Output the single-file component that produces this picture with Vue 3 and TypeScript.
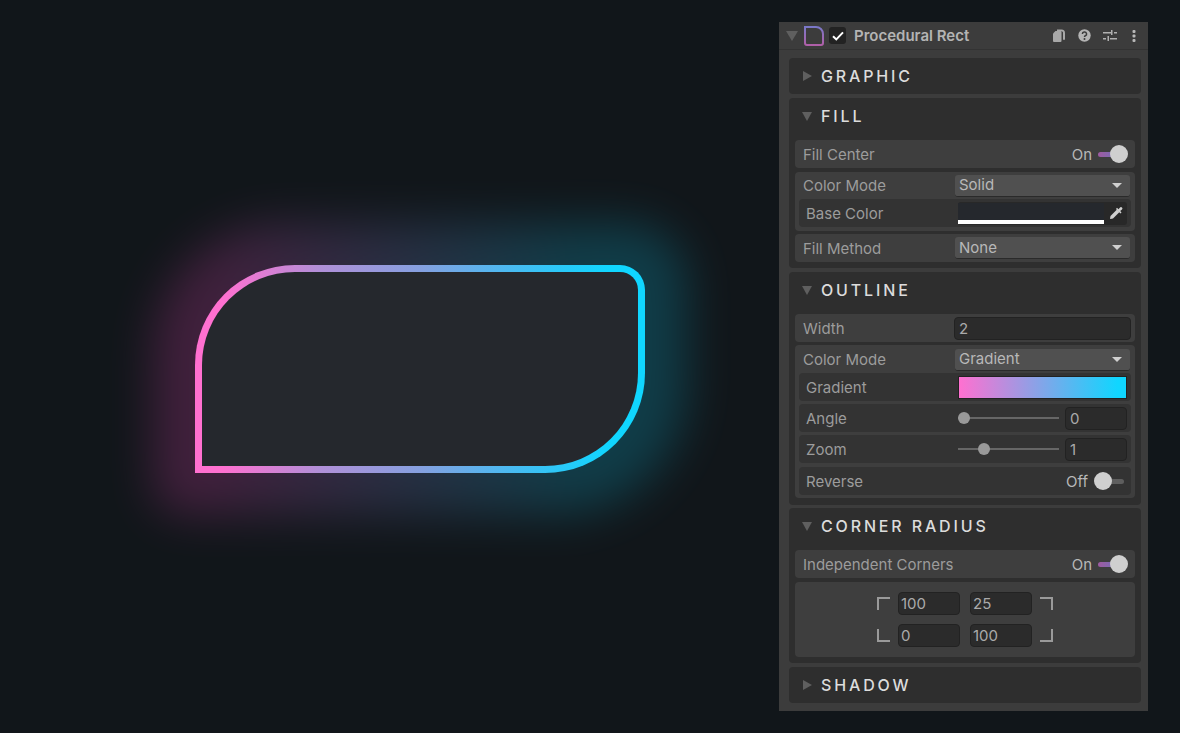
<script setup lang="ts">
const corners = [
  { value: '100', path: 'M1 13V1H13' },
  { value: '25', path: 'M0 1H12V13' },
  { value: '0', path: 'M1 0V12H13' },
  { value: '100', path: 'M0 12H12V0' },
];
</script>

<template>
  <div class="page">
    <main class="canvas">
      <div class="shape-wrap">
        <div class="glow"></div>
        <div class="shape"><div class="shape-inner"></div></div>
      </div>
    </main>

    <aside class="panel">
      <header class="panel-head">
        <span class="tri tri-down head-tri"></span>
        <svg class="comp-icon" width="20" height="20" viewBox="0 0 20 20" fill="none">
          <defs>
            <linearGradient id="compStroke" x1="0" y1="0" x2="0" y2="1">
              <stop offset="0" stop-color="#7a78c8" />
              <stop offset="1" stop-color="#b05fa8" />
            </linearGradient>
          </defs>
          <path d="M1 1H12A7 7 0 0 1 19 8V17A2 2 0 0 1 17 19H3A2 2 0 0 1 1 17Z" stroke="url(#compStroke)" stroke-width="2" />
        </svg>
        <span class="check">
          <svg width="12" height="10" viewBox="0 0 12 10" fill="none">
            <path d="M1 5.2L4.3 8.4L11 1.4" stroke="#fff" stroke-width="2" />
          </svg>
        </span>
        <span class="panel-title">Procedural Rect</span>
        <span class="head-icons">
          <svg width="14" height="15" viewBox="0 0 14 15" fill="#a8a8a8">
            <path d="M1 5.5L3.5 3H8.5A1 1 0 0 1 9.500 4V13A1 1 0 0 1 8.500 14H2A1 1 0 0 1 1 13Z" />
            <path d="M5 1.500H9.500A3.500 3.500 0 0 1 13 5V11A1 1 0 0 1 11 11V5.500A2 2 0 0 0 9 3.200H5Z" />
          </svg>
          <svg width="13" height="13" viewBox="0 0 13 13">
            <circle cx="6.500" cy="6.500" r="6.200" fill="#b4b4b4" />
            <path d="M4.400 5A2.100 1.900 0 1 1 7.400 6.700C6.700 7.100 6.500 7.400 6.500 8" stroke="#3c3c3c" stroke-width="1.500" fill="none" />
            <circle cx="6.500" cy="10" r="1" fill="#3c3c3c" />
          </svg>
          <svg width="14" height="13" viewBox="0 0 14 13" fill="#b0b0b0">
            <rect x="0" y="3" width="8" height="1.500" />
            <rect x="8" y="1" width="1.500" height="5" />
            <rect x="11" y="3" width="3" height="1.500" />
            <rect x="0" y="9" width="3" height="1.500" />
            <rect x="4.500" y="7" width="1.500" height="5" />
            <rect x="7" y="9" width="7" height="1.500" />
          </svg>
          <svg class="dots" width="4" height="12" viewBox="0 0 4 12" fill="#b8b8b8">
            <rect x="0.500" y="0" width="3" height="3" rx="1" />
            <rect x="0.500" y="4.500" width="3" height="3" rx="1" />
            <rect x="0.500" y="9" width="3" height="3" rx="1" />
          </svg>
        </span>
      </header>

      <div class="sections">
        <section class="section">
          <div class="sec-head"><span class="tri tri-right"></span><h2>GRAPHIC</h2></div>
        </section>

        <section class="section open fill">
          <div class="sec-head"><span class="tri tri-down"></span><h2>FILL</h2></div>
          <div class="row">
            <span class="label">Fill Center</span>
            <span class="toggle on"><span class="toggle-text">On</span><span class="track"><span class="knob"></span></span></span>
          </div>
          <div class="group">
            <div class="row plain">
              <span class="label">Color Mode</span>
              <span class="select">Solid<i class="caret"></i></span>
            </div>
            <div class="row inner">
              <span class="label">Base Color</span>
              <span class="color-field">
                <span class="swatch"></span>
                <svg class="dropper" width="14" height="14" viewBox="0 0 14 14" fill="#d0d0d0">
                  <path d="M8 3.500L10.500 6L4 12.500L1.500 13L1 12.500L1.500 10Z" />
                  <path d="M8 1.800L9.500 3.300L11 1.500A1.400 1.400 0 0 1 13 3.500L11.200 5L12.500 6.500L11.500 7.500L7 3Z" />
                </svg>
              </span>
            </div>
          </div>
          <div class="row method">
            <span class="label">Fill Method</span>
            <span class="select">None<i class="caret"></i></span>
          </div>
        </section>

        <section class="section open outline">
          <div class="sec-head"><span class="tri tri-down"></span><h2>OUTLINE</h2></div>
          <div class="row">
            <span class="label">Width</span>
            <span class="input wide">2</span>
          </div>
          <div class="group">
            <div class="row plain">
              <span class="label">Color Mode</span>
              <span class="select">Gradient<i class="caret"></i></span>
            </div>
            <div class="row inner">
              <span class="label">Gradient</span>
              <span class="grad-field"></span>
            </div>
            <div class="row inner">
              <span class="label">Angle</span>
              <span class="slider"><span class="thumb" style="left: 0px"></span></span>
              <span class="input num">0</span>
            </div>
            <div class="row inner">
              <span class="label">Zoom</span>
              <span class="slider"><span class="thumb" style="left: 20px"></span></span>
              <span class="input num">1</span>
            </div>
            <div class="row inner last">
              <span class="label">Reverse</span>
              <span class="toggle off"><span class="toggle-text">Off</span><span class="track"><span class="knob"></span></span></span>
            </div>
          </div>
        </section>

        <section class="section open corner">
          <div class="sec-head"><span class="tri tri-down"></span><h2>CORNER RADIUS</h2></div>
          <div class="row">
            <span class="label">Independent Corners</span>
            <span class="toggle on"><span class="toggle-text">On</span><span class="track"><span class="knob"></span></span></span>
          </div>
          <div class="corner-box">
            <div class="corner-cell left">
              <svg width="13" height="13" viewBox="0 0 13 13" fill="none" stroke="#9a9a9a" stroke-width="2"><path :d="corners[0].path" /></svg>
              <span class="input cell">{{ corners[0].value }}</span>
            </div>
            <div class="corner-cell right">
              <span class="input cell">{{ corners[1].value }}</span>
              <svg width="13" height="13" viewBox="0 0 13 13" fill="none" stroke="#9a9a9a" stroke-width="2"><path :d="corners[1].path" /></svg>
            </div>
            <div class="corner-cell left">
              <svg width="13" height="13" viewBox="0 0 13 13" fill="none" stroke="#9a9a9a" stroke-width="2"><path :d="corners[2].path" /></svg>
              <span class="input cell">{{ corners[2].value }}</span>
            </div>
            <div class="corner-cell right">
              <span class="input cell">{{ corners[3].value }}</span>
              <svg width="13" height="13" viewBox="0 0 13 13" fill="none" stroke="#9a9a9a" stroke-width="2"><path :d="corners[3].path" /></svg>
            </div>
          </div>
        </section>

        <section class="section">
          <div class="sec-head"><span class="tri tri-right"></span><h2>SHADOW</h2></div>
        </section>
      </div>
    </aside>
  </div>
</template>

<style>
html,
body {
  margin: 0;
  background: #11161a;
}
</style>

<style scoped>
.page {
  display: flex;
  width: 1180px;
  height: 733px;
  overflow: hidden;
  background: #11161a;
  font-family: Inter, "Liberation Sans", sans-serif;
}

.canvas {
  flex: 1;
  padding: 265px 0 0 195px;
}

.shape-wrap {
  position: relative;
  width: 450px;
  height: 208px;
}

.glow {
  position: absolute;
  inset: -42px;
  border-radius: 130px 60px 130px 30px;
  background: linear-gradient(90deg, #ff48c4 10%, #10d6ff 80%);
  opacity: 0.2;
  filter: blur(23px);
}

.shape {
  position: relative;
  box-sizing: border-box;
  height: 100%;
  padding: 7px;
  border-radius: 100px 25px 100px 0;
  background: linear-gradient(90deg, #ff70d0 6%, #b090d8 28%, #86a0e0 50%, #58b4ee 65%, #2bc8f8 81%, #10d6ff 92%);
}

.shape-inner {
  height: 100%;
  border-radius: 93px 18px 93px 0;
  background: #25282d;
}

.panel {
  box-sizing: border-box;
  width: 369px;
  height: 689px;
  margin: 22px 32px 0 0;
  background: #3c3c3c;
}

.panel-head {
  display: flex;
  align-items: center;
  height: 27px;
  padding-left: 7px;
  border-bottom: 1px solid #333;
}

.tri.head-tri {
  margin-left: 0;
  margin-right: 6px;
  border-left-width: 6px;
  border-right-width: 6px;
  border-top-width: 10px;
}

.comp-icon {
  margin-right: 5px;
}

.check {
  display: flex;
  align-items: center;
  justify-content: center;
  width: 17px;
  height: 17px;
  margin-right: 8px;
  border-radius: 3px;
  background: #222;
}

.panel-title {
  font-size: 15px;
  font-weight: 600;
  color: #b4b4b4;
}

.head-icons {
  display: flex;
  align-items: center;
  gap: 12px;
  margin-left: auto;
  margin-right: 12px;
}

.dots {
  margin-left: 3px;
}

.sections {
  display: flex;
  flex-direction: column;
  gap: 4px;
  padding: 8px 7px 0 10px;
}

.section {
  box-sizing: border-box;
  padding: 0 6px;
  border-radius: 4px;
  background: #2e2e2e;
}

.section.open {
  display: flex;
  flex-direction: column;
  padding-bottom: 6px;
}

.section.outline {
  padding-bottom: 7px;
  margin-bottom: -1px;
}

.sec-head {
  display: flex;
  align-items: center;
  height: 36px;
  padding-left: 8px;
}

.section.open .sec-head {
  margin-bottom: 6px;
}

.sec-head h2 {
  margin: 0 0 0 9px;
  font-size: 16px;
  font-weight: 500;
  letter-spacing: 2.85px;
  color: #dcdcdc;
}

.tri {
  display: inline-block;
  width: 0;
  height: 0;
  flex: none;
}

.tri-right {
  border-top: 5px solid transparent;
  border-bottom: 5px solid transparent;
  border-left: 9px solid #5f5f5f;
}

.tri-down {
  border-left: 5px solid transparent;
  border-right: 5px solid transparent;
  border-top: 9px solid #5f5f5f;
  margin-left: -1px;
}

.row {
  display: flex;
  align-items: center;
  box-sizing: border-box;
  height: 28px;
  padding: 0 5px 0 8px;
  border-radius: 4px;
  background: #3e3e3e;
}

.row.plain {
  height: 27px;
  margin-bottom: -3px;
  border-radius: 0;
  background: none;
}

.outline .row.plain {
  height: 29px;
  margin-bottom: -4px;
}

.row.inner {
  margin: 0 4px;
  padding: 0 4px 0 7px;
  background: #333;
}

.row.last {
  margin-top: 1px;
}

.label {
  font-size: 15px;
  color: #9c9c9c;
}

.group {
  display: flex;
  flex-direction: column;
  gap: 3px;
  padding-bottom: 4px;
  margin: 4px 0 3px;
  border-radius: 4px;
  background: #3e3e3e;
}

.outline .group {
  margin: 3px 0 0;
  padding-bottom: 3px;
}

.select {
  position: relative;
  box-sizing: border-box;
  width: 175px;
  height: 22px;
  margin-left: auto;
  padding-left: 4px;
  border-radius: 3px;
  border-bottom: 1px solid #2a2a2a;
  background: #505050;
  font-size: 15px;
  line-height: 20px;
  color: #b8b8b8;
}

.method .select {
  padding-top: 1px;
}

.caret {
  position: absolute;
  top: 8px;
  right: 8px;
  width: 0;
  height: 0;
  border-left: 5px solid transparent;
  border-right: 5px solid transparent;
  border-top: 5px solid #d0d0d0;
}

.color-field {
  display: flex;
  align-items: center;
  box-sizing: border-box;
  width: 169px;
  height: 23px;
  margin-left: auto;
  border-radius: 3px;
  background: #282828;
}

.swatch {
  box-sizing: border-box;
  width: 146px;
  height: 21px;
  border-bottom: 4px solid #fff;
  background: #25282d;
}

.dropper {
  margin-left: 5px;
}

.grad-field {
  box-sizing: border-box;
  width: 169px;
  height: 23px;
  margin-left: auto;
  border: 1px solid #222;
  background: linear-gradient(90deg, #ff70d0, #10d6ff 95%);
}

.slider {
  position: relative;
  width: 101px;
  height: 2px;
  margin-left: auto;
  background: #666;
}

.thumb {
  position: absolute;
  top: -5px;
  width: 12px;
  height: 12px;
  border-radius: 50%;
  background: #999;
}

.input {
  display: block;
  box-sizing: border-box;
  height: 23px;
  padding-left: 4px;
  border: 1px solid #222;
  border-radius: 4px;
  background: #2b2b2b;
  font-size: 15px;
  line-height: 21px;
  color: #aaa;
}

.input.wide {
  width: 177px;
  margin-left: auto;
  margin-right: -1px;
}

.input.num {
  width: 62px;
  margin-left: 6px;
}

.input.cell {
  width: 62px;
  padding-left: 2px;
}

.toggle {
  display: flex;
  align-items: center;
  margin-left: auto;
}

.toggle-text {
  font-size: 15px;
  color: #b8b8b8;
}

.track {
  position: relative;
  display: block;
  height: 5px;
  border-radius: 3px;
}

.toggle.on .track {
  width: 20px;
  margin: 0 12px 0 6px;
  background: linear-gradient(90deg, #a05aa0, #7070b8);
}

.toggle.off .track {
  width: 26px;
  margin: 0 3px 0 10px;
  background: #5e5e5e;
}

.knob {
  position: absolute;
  top: -7px;
  width: 18px;
  height: 18px;
  border-radius: 50%;
  background: #cfcfcf;
}

.toggle.on .knob {
  right: -10px;
}

.toggle.off .knob {
  left: -4px;
}

.corner-box {
  display: grid;
  grid-template-columns: auto auto;
  justify-content: center;
  align-content: start;
  gap: 9px 10px;
  box-sizing: border-box;
  height: 75px;
  margin-top: 4px;
  padding-top: 10px;
  border-radius: 4px;
  background: #3e3e3e;
}

.corner-cell {
  display: flex;
  align-items: center;
  gap: 8px;
}
</style>
